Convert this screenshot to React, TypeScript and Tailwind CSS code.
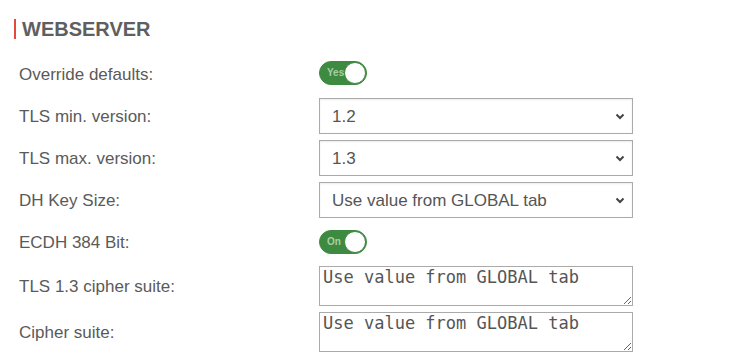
import React from 'react';

const Toggle = ({ label }: { label: string }) => (
  <div className="relative w-[48px] h-[24px] rounded-full bg-[#3f8a41] border border-[#3f8a41]">
    <span className="absolute left-[7px] top-1/2 -translate-y-1/2 text-[10px] leading-none font-semibold text-[#a9cfa3] font-['Liberation_Sans',Arial,sans-serif]">
      {label}
    </span>
    <span className="absolute right-0 top-0 w-[22px] h-[22px] rounded-full bg-white border border-[#3f8a41]" />
  </div>
);

const Select = ({ value }: { value: string }) => (
  <div className="relative w-[314px] h-[36px]">
    <select
      defaultValue={value}
      className="appearance-none w-full h-full pl-[12px] pr-8 pt-[1px] border border-[#aaaaaa] bg-white text-[17px] text-[#555555] shadow-[inset_0_1px_2px_rgba(0,0,0,0.08)] outline-none font-['Liberation_Sans',Arial,sans-serif]"
    >
      <option>{value}</option>
    </select>
    <svg className="absolute right-[8px] top-1/2 -translate-y-1/2 pointer-events-none" width="10" height="8" viewBox="0 0 10 8">
      <path d="M1.5 2.5 L5 6 L8.5 2.5" fill="none" stroke="#444" strokeWidth="2" />
    </svg>
  </div>
);

const TextArea = () => (
  <textarea
    defaultValue="Use value from GLOBAL tab"
    className="block w-[314px] h-[40px] px-[3px] py-0 border border-[#aaaaaa] bg-white text-[17px] leading-[21px] text-[#555555] outline-none font-['DejaVu_Sans_Mono',monospace]"
  />
);

const Row = ({ label, children, tall }: { label: string; children: React.ReactNode; tall?: boolean }) => (
  <div className={`flex items-center ${tall ? 'h-[46px]' : 'h-[42px]'}`}>
    <div className="w-[319px] shrink-0 pl-[19px] pt-[2px] text-[17px] text-[#5a5a5a]">{label}</div>
    <div>{children}</div>
  </div>
);

export default function App() {
  return (
    <div className="w-[741px] h-[363px] bg-white font-['Liberation_Sans',Arial,sans-serif]">
      <div className="pt-[19px] pl-[14px] flex h-[53px] items-start">
        <div className="w-[2px] h-[20px] bg-[#e8473b]" />
        <h2 className="ml-[6px] text-[20px] leading-[20px] font-bold text-[#5f5f5f]">WEBSERVER</h2>
      </div>
      <Row label="Override defaults:">
        <div className="-mt-[3px]"><Toggle label="Yes" /></div>
      </Row>
      <Row label="TLS min. version:"><Select value="1.2" /></Row>
      <Row label="TLS max. version:"><Select value="1.3" /></Row>
      <Row label="DH Key Size:"><Select value="Use value from GLOBAL tab" /></Row>
      <Row label="ECDH 384 Bit:">
        <div className="-mt-[1px]"><Toggle label="On" /></div>
      </Row>
      <Row label="TLS 1.3 cipher suite:" tall><TextArea /></Row>
      <Row label="Cipher suite:" tall><TextArea /></Row>
    </div>
  );
}
